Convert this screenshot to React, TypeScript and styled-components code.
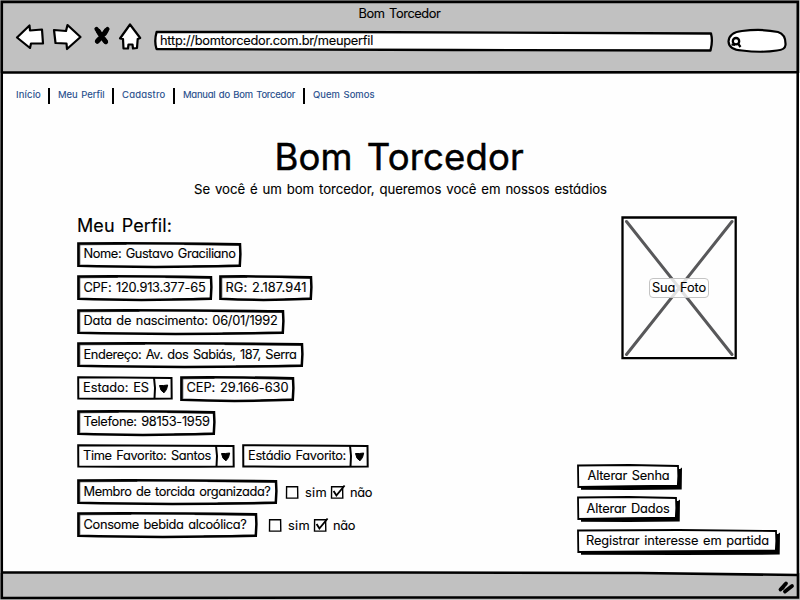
import React, { useLayoutEffect, useRef, useState } from "react";
import styled, { createGlobalStyle } from "styled-components";

const GlobalStyle = createGlobalStyle`
  * { box-sizing: border-box; }
  body { margin: 0; background: #fff; }
`;

const Window = styled.div`
  position: relative;
  width: 800px;
  height: 600px;
  overflow: hidden;
  display: grid;
  grid-template-rows: 73px 500px 27px;
  background: #fefefe;
  color: #000;
  font-family: Inter, "Noto Sans", sans-serif;
  font-feature-settings: "cv11" 1;
  font-size: 12.8px;
`;

const Overlay = styled.svg`
  position: absolute;
  left: 0;
  top: 0;
  overflow: visible;
  pointer-events: none;
`;

const Icon = styled.svg`
  display: block;
  flex: none;
  overflow: visible;
`;

const Chrome = styled.header`
  background: #c1c1c1;
`;

const WindowTitle = styled.div`
  height: 23px;
  padding: 4px 0 0 358.5px;
`;

const Toolbar = styled.div`
  display: flex;
  height: 32px;
  padding-left: 15px;
`;

const ToolIcons = styled(Icon)`
  margin-right: 12px;
`;

const Address = styled.div`
  position: relative;
  width: 559px;
  height: 21px;
  margin-top: 7.5px;
  padding: 0 0 0 6px;
`;

const SearchIcon = styled(Icon)`
  margin: 5px 0 0 14px;
`;

const Content = styled.main`
  padding: 0 0 0 3px;
`;

const Nav = styled.nav`
  display: flex;
  align-items: center;
  height: 16px;
  margin: 15px 0 0 13px;
`;

const NavLink = styled.a`
  color: #1d4b8b;
  font-size: 9.5px;
  padding-bottom: 2px;
`;

const NavDivider = styled.span<{ $before: number }>`
  width: 2px;
  height: 16px;
  margin: 0 8px 0 ${(p) => p.$before}px;
  background: #000;
`;

const Hero = styled.div`
  display: flex;
  flex-direction: column;
  margin-left: 191px;
`;

const HeroTitle = styled.h1`
  margin: 33px 0 0 80.5px;
  font-size: 36.5px;
  font-weight: 400;
  line-height: 40px;
`;

const HeroText = styled.p`
  margin: 2px 0 1px;
  font-size: 13.2px;
`;

const Columns = styled.div`
  display: grid;
  grid-template-columns: 500px 1fr;
  margin: 16px 0 0 74px;
`;

const Profile = styled.section`
  display: flex;
  flex-direction: column;
`;

const SectionTitle = styled.h2`
  margin: 0;
  height: 26px;
  font-size: 18px;
  font-weight: 400;
`;

const Row = styled.div<{ $height: number }>`
  display: flex;
  align-items: flex-start;
  height: ${(p) => p.$height}px;
`;

const FieldBox = styled.div<{ $w: number }>`
  position: relative;
  flex: none;
  display: flex;
  width: ${(p) => p.$w}px;
  height: 26px;
  margin-right: 6px;
  padding: 2.4px 0 0 6.5px;
`;

const SelectBox = styled(FieldBox)`
  height: 24px;
  padding: 2px 0 0 6px;
  margin-right: 7px;
`;

const Choice = styled.label<{ $before: number }>`
  display: flex;
  align-items: flex-start;
  margin: 5px 0 0 ${(p) => p.$before}px;
  gap: 6.5px;
`;

const ChoiceText = styled.span`
  margin-top: -1.6px;
`;

const Side = styled.aside`
  display: flex;
  flex-direction: column;
  align-items: flex-start;
`;

const Photo = styled.div`
  position: relative;
  display: grid;
  place-items: center;
  width: 116px;
  height: 144px;
  margin: 0 0 103.5px 44px;
`;

const PhotoCaption = styled.div`
  position: relative;
  width: 60px;
  height: 20px;
  border: 1px solid #c4c4c4;
  border-radius: 4px;
  background: rgba(255, 255, 255, 0.82);
  padding: 0 0 0 2.5px;
  margin: -1px 1px 0 0;

  & > span { line-height: 18px; }
`;

const ActionButton = styled.button<{ $w: number; $pad: number }>`
  position: relative;
  display: block;
  width: ${(p) => p.$w}px;
  height: 26px;
  margin: 0 0 6.7px;
  padding: 0 0 1px ${(p) => p.$pad}px;
  border: 0;
  background: none;
  color: inherit;
  font: inherit;
  font-feature-settings: inherit;
  text-align: left;
`;

const Footer = styled.footer`
  background: #c1c1c1;
`;

const Line = styled.span`
  position: relative;
  display: block;
  width: max-content;
  white-space: pre;
  word-spacing: 0.1em;
  line-height: 20px;
  -webkit-text-stroke: 0.12px currentColor;

  h1 & { line-height: 40px; -webkit-text-stroke-width: 0.5px; }
  h2 & { -webkit-text-stroke-width: 0.15px; }
`;

/** Text whose tracking is spread so that the line is `w` pixels wide. */
function Tracked({ w, children }: { w: number; children: string }) {
  const ref = useRef<HTMLSpanElement>(null);
  const [tracking, setTracking] = useState(0);
  useLayoutEffect(() => {
    if (ref.current) {
      const natural = ref.current.getBoundingClientRect().width;
      setTracking((w - natural) / children.length);
    }
  }, []);
  return <Line ref={ref} style={{ letterSpacing: tracking }}>{children}</Line>;
}

function Field({ w, textWidth, children }: { w: number; textWidth: number; children: string }) {
  return (
    <FieldBox $w={w}>
      <Overlay width={w} height={26} fill="none" stroke="#000">
        <path strokeWidth="2.5" d={`M1.4 1.5Q${w * 0.4} 1 ${w - 2} 2.2L${w - 1.6} 12L${w - 2.2} 23.8Q${w * 0.45} 26 1.4 23.8Z`} />
        <path strokeWidth="0.7" d={`M2.4 2.8L${w * 0.3} 2.4M${w * 0.65} 2.6L${w - 3} 3.4M2.8 3V22.6M${w * 0.7} 24L${w - 3} 23`} />
      </Overlay>
      <Tracked w={textWidth}>{children}</Tracked>
    </FieldBox>
  );
}

function Select({ w, textWidth, children }: { w: number; textWidth: number; children: string }) {
  const d = w - 18.5;
  return (
    <SelectBox $w={w}>
      <Overlay width={w} height={24} fill="none" stroke="#000" strokeWidth="2">
        <path d={`M1.2 1.2Q${w * 0.4} 1.2 ${w - 1.5} 1.9L${w - 1.3} 22.5Q${w * 0.5} 22.9 1.3 22.4Z`} />
        <path d={`M${d - 0.5} 1.5L${d + 0.5} 12L${d} 22.5`} />
        <path fill="#000" strokeWidth="1" strokeLinejoin="round" d={`M${d + 5} 9.5L${d + 9} 9.5L${d + 13.2} 9L${d + 12} 13.5L${d + 9.5} 16.8L${d + 6.5} 14.2Z`} />
      </Overlay>
      <Tracked w={textWidth}>{children}</Tracked>
    </SelectBox>
  );
}

function Checkbox({ checked, label, before }: { checked?: boolean; label: string; before: number }) {
  return (
    <Choice $before={before}>
      <Icon width={13} height={16} fill="none" stroke="#000" strokeWidth="1.4">
        <path d="M0.6 2.6L11.6 2.7L11.8 14L0.5 14.1Z" />
        {checked && <path strokeWidth="1.9" d="M2.6 7.1L5.4 11.5L13.6 1.5" />}
      </Icon>
      <ChoiceText><Tracked w={22}>{label}</Tracked></ChoiceText>
    </Choice>
  );
}

function Action({ w, pad, textWidth, children }: { w: number; pad: number; textWidth: number; children: string }) {
  return (
    <ActionButton $w={w} $pad={pad}>
      <Overlay width={w} height={26}>
        <path d={`M4 5H${w - 2}L${w} 3.5L${w - 0.3} 25.6L${w * 0.5} 25.9L4 25.7Z`} />
        <path fill="#fff" stroke="#000" strokeWidth="1.8" d={`M1 1.5L${w * 0.5} 1L${w - 4} 2L${w - 3.7} 12L${w - 4.2} 21.7L${w * 0.5} 22.1L1.3 23Z`} />
      </Overlay>
      <Tracked w={textWidth}>{children}</Tracked>
    </ActionButton>
  );
}

const links = [
  { text: "Início", width: 25, gap: 7 },
  { text: "Meu Perfil", width: 46.5, gap: 7.5 },
  { text: "Cadastro", width: 43.5, gap: 7.5 },
  { text: "Manual do Bom Torcedor", width: 112, gap: 8 },
  { text: "Quem Somos", width: 61.5, gap: 0 },
];

export default function App() {
  return (
    <Window>
      <GlobalStyle />
      <Chrome>
        <WindowTitle><Tracked w={82}>Bom Torcedor</Tracked></WindowTitle>
        <Toolbar>
          <ToolIcons width={127} height={30} fill="#fff" stroke="#000" strokeWidth="2.2" strokeLinejoin="round">
            <path d="M2 14.5L14.5 2.5L15 7.5L27 6.5L28 20.5L16 20.5L15 25Z" />
            <path d="M39 7L51 8L52.5 2L65.5 14L52 26L51.5 20.5L40.5 20Z" />
            <path strokeLinecap="round" strokeWidth="4.2" d="M81.5 6L91 19M92.5 6L82 18.5" />
            <path strokeLinecap="round" strokeWidth="5" d="M83.5 8.5L85 11M91 8L89.5 10.5M88.5 16L90.5 18.5M84 16.5L82.5 18" />
            <path d="M115 1.5L125.2 15L122.7 16L122 25L118 25.5L117.5 21.5L113.5 21.5L113 25.5L108.5 25.5L108 16L105 15.5Z" />
          </ToolIcons>
          <Address>
            <Overlay width={559} height={21} fill="#fff" stroke="#000" strokeWidth="2.3" strokeLinejoin="round">
              <path d="M2.6 1L180 1L557 2.5Q559 10 556.5 19.5L300 19L2.5 18Q0 10 2.6 1Z" />
            </Overlay>
            <Tracked w={213}>http://bomtorcedor.com.br/meuperfil</Tracked>
          </Address>
          <SearchIcon width={62} height={26} fill="#fff" stroke="#000" strokeWidth="2.2">
            <path d="M15 3Q35 0.5 51 4Q59 6.5 58.5 17Q58 22 50 22.5Q34 25 15 22.5Q2 22 1.500 13.5Q2 4.5 15 3Z" />
            <circle cx="9" cy="13.2" r="3.2" strokeWidth="2.3" />
            <path d="M4.5 16.500L8 17M11 15.5L13.5 19" strokeWidth="2.2" />
          </SearchIcon>
        </Toolbar>
      </Chrome>

      <Content>
        <Nav>
          {links.map((link, i) => (
            <React.Fragment key={link.text}>
              <NavLink><Tracked w={link.width}>{link.text}</Tracked></NavLink>
              {i < links.length - 1 && <NavDivider $before={link.gap} />}
            </React.Fragment>
          ))}
        </Nav>
        <Hero>
          <HeroTitle><Tracked w={249.5}>Bom Torcedor</Tracked></HeroTitle>
          <HeroText><Tracked w={413}>Se você é um bom torcedor, queremos você em nossos estádios</Tracked></HeroText>
        </Hero>
        <Columns>
          <Profile>
            <SectionTitle><Tracked w={95}>Meu Perfil:</Tracked></SectionTitle>
            <Row $height={33.3}><Field w={165} textWidth={152}>Nome: Gustavo Graciliano</Field></Row>
            <Row $height={33.4}>
              <Field w={136} textWidth={122}>CPF: 120.913.377-65</Field>
              <Field w={94} textWidth={81}>RG: 2.187.941</Field>
            </Row>
            <Row $height={33.5}><Field w={208} textWidth={194}>Data de nascimento: 06/01/1992</Field></Row>
            <Row $height={33.8}><Field w={227} textWidth={213}>Endereço: Av. dos Sabiás, 187, Serra</Field></Row>
            <Row $height={34}>
              <Select w={96} textWidth={66}>Estado: ES</Select>
              <Field w={115} textWidth={102}>CEP: 29.166-630</Field>
            </Row>
            <Row $height={34}><Field w={139} textWidth={126}>Telefone: 98153-1959</Field></Row>
            <Row $height={35.4}>
              <Select w={158} textWidth={128}>Time Favorito: Santos</Select>
              <Select w={127} textWidth={98}>Estádio Favorito:</Select>
            </Row>
            <Row $height={33}>
              <Field w={201} textWidth={187}>Membro de torcida organizada?</Field>
              <Checkbox before={1.5} label="sim" />
              <Checkbox before={3.5} checked label="não" />
            </Row>
            <Row $height={33}>
              <Field w={181} textWidth={163}>Consome bebida alcoólica?</Field>
              <Checkbox before={4.5} label="sim" />
              <Checkbox before={3.5} checked label="não" />
            </Row>
          </Profile>
          <Side>
            <Photo>
              <Overlay width={116} height={144} fill="none" stroke="#000" strokeWidth="2.3">
                <path strokeWidth="3" strokeLinecap="round" stroke="#58585a" d="M5.5 5.5L111 138.5M111 5.5L5.5 138.5" />
                <path d="M1.5 1.5H114.7V142.2H1.5Z" />
              </Overlay>
              <PhotoCaption><Tracked w={54}>Sua Foto</Tracked></PhotoCaption>
            </Photo>
            <Action w={105} pad={10.5} textWidth={82}>Alterar Senha</Action>
            <Action w={103} pad={9.5} textWidth={83}>Alterar Dados</Action>
            <Action w={203} pad={9} textWidth={183}>Registrar interesse em partida</Action>
          </Side>
        </Columns>
      </Content>

      <Footer />
      <Overlay width={800} height={600} fill="none" stroke="#000" strokeWidth="2.6">
        <path fill="#fefefe" stroke="none" d="M450 572H797V575.5L720 574.5Z" />
        <path d="M1.8 1.9H797.8L797.5 300L798 597.5L400 597.5L1.8 598L1.5 300Z" />
        <path d="M2 72.5L797 72.3" />
        <path d="M2 572.5L400 572.5L640 573L797 575" />
        <path strokeLinecap="round" strokeWidth="3.8" d="M780.5 589.5L786 583.5M785 591.5L792 586M782.5 588L784.5 585" />
      </Overlay>
    </Window>
  );
}
